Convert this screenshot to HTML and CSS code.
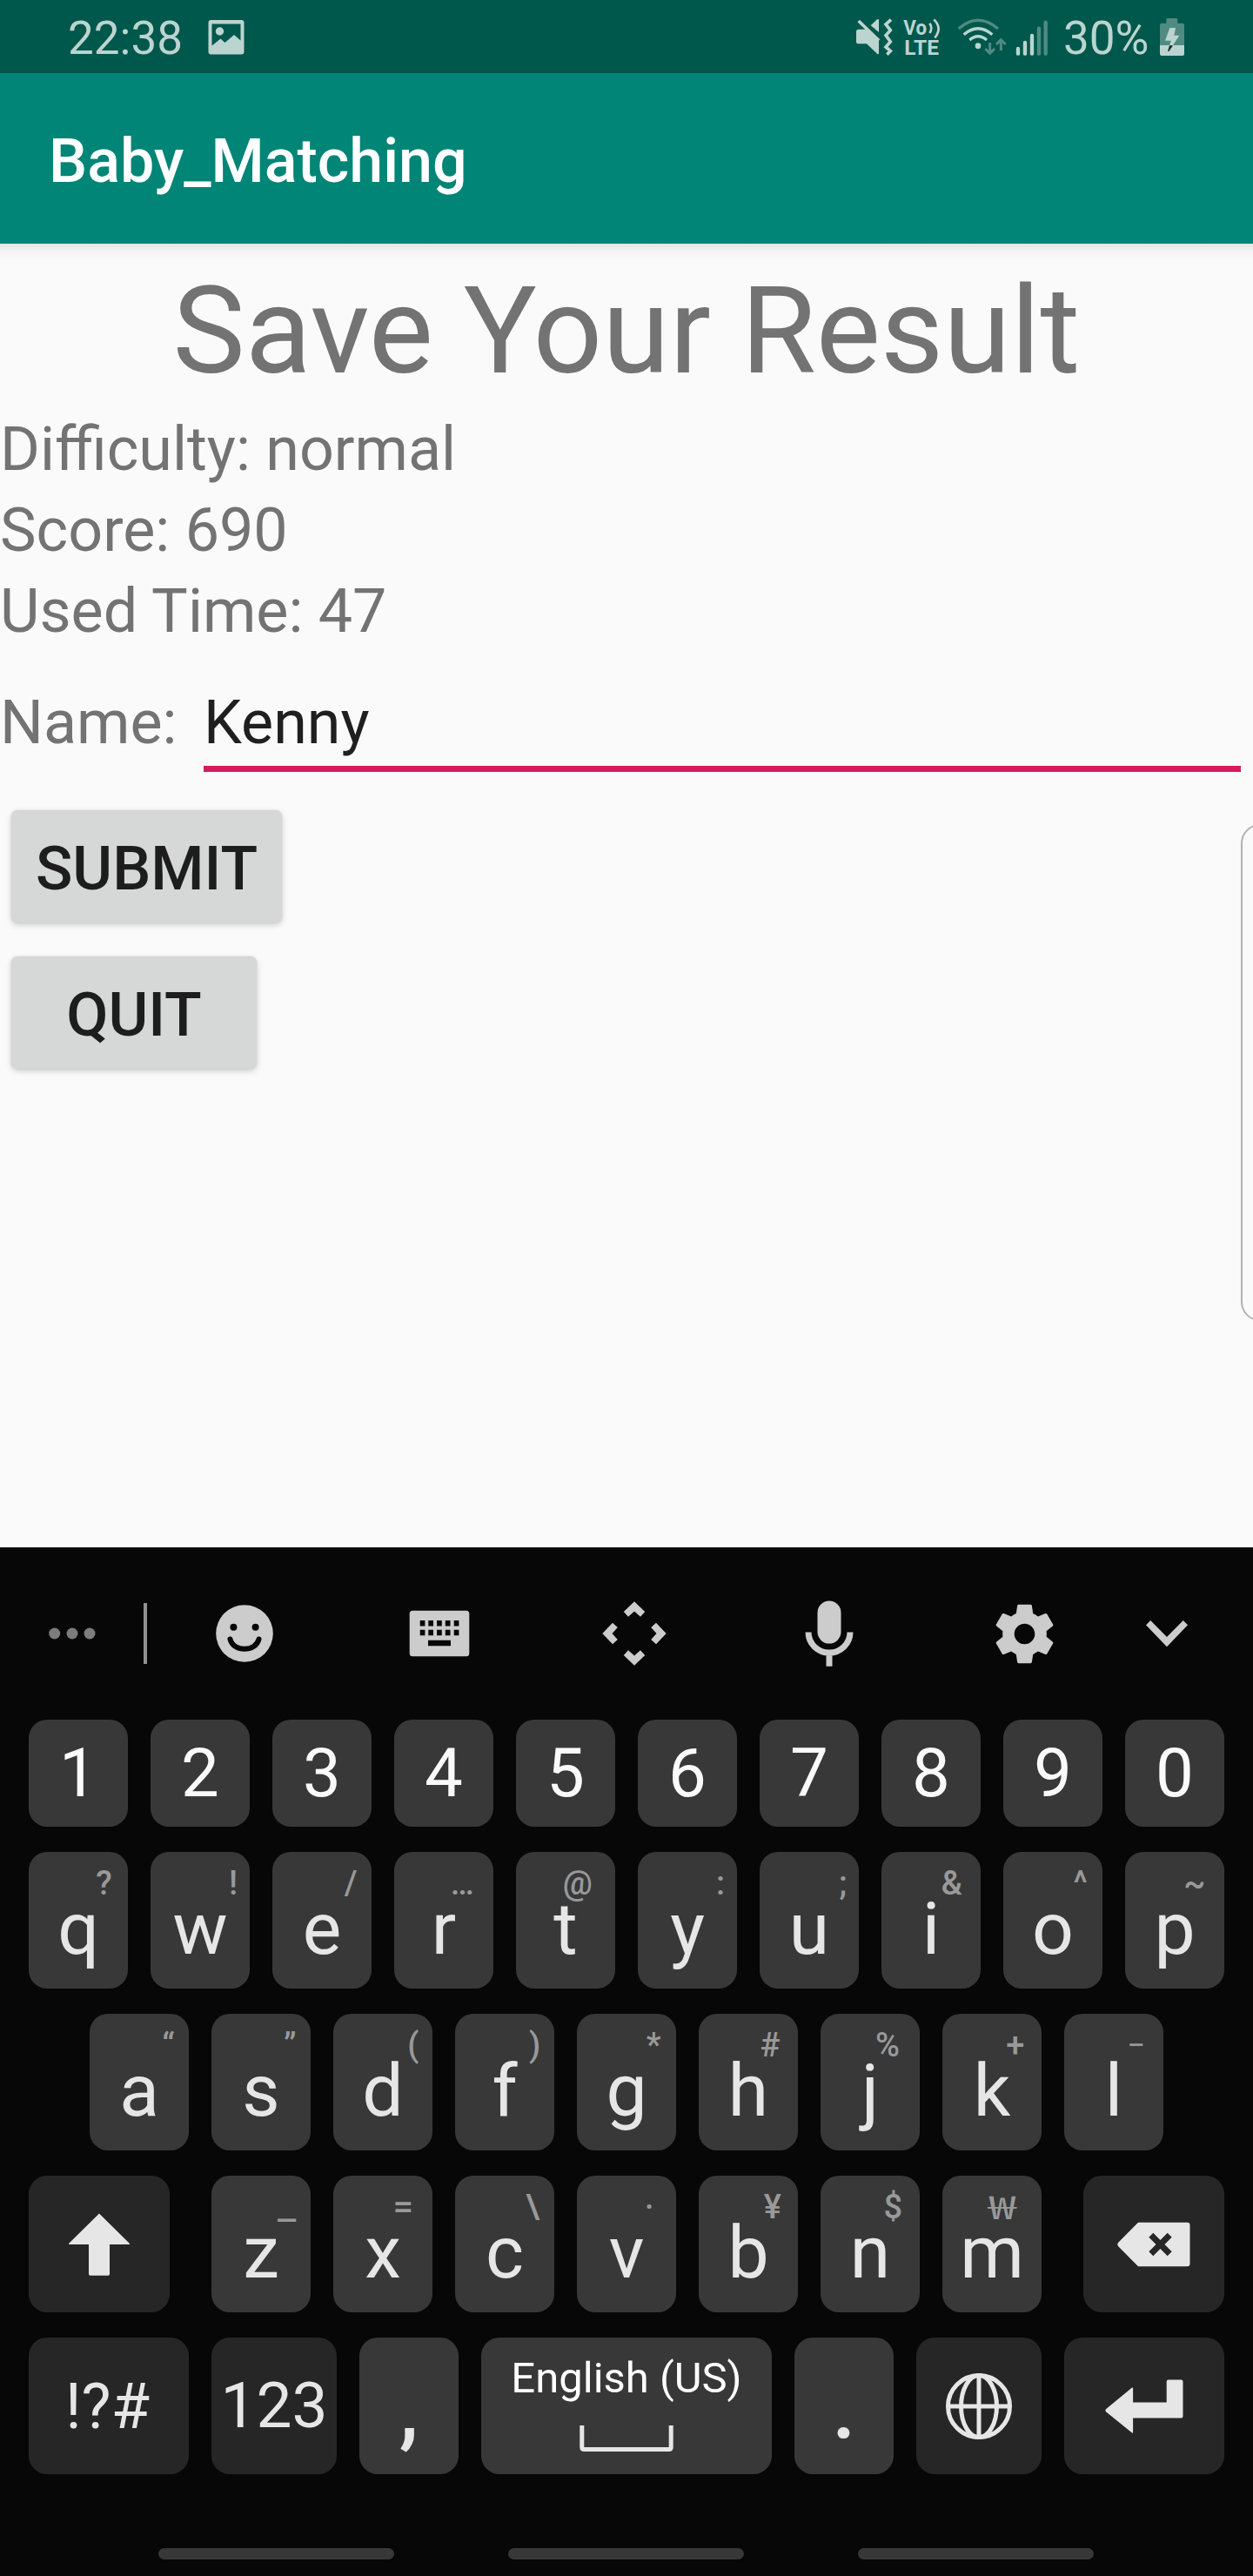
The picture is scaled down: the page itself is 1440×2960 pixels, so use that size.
FILE: index.html
```html
<!DOCTYPE html>
<html lang="en">
<head>
<meta charset="utf-8">
<title>Baby_Matching</title>
<link rel="stylesheet" href="styles.css">
</head>
<body>
<div class="phone">
  <header class="status">
    <span class="clock">22:38</span>
    <svg class="picture" width="42" height="40" viewBox="0 0 42 40">
      <path fill-rule="evenodd" d="M3.500 0h35a3 3 0 0 1 3 3v33.500a3 3 0 0 1-3 3h-35a3 3 0 0 1-3-3V3a3 3 0 0 1 3-3zM4.500 4.500V29.500L14.500 21.500L19.500 26L30 17L37.500 23.500V4.500z"/>
      <circle cx="13.500" cy="13" r="4.700"/>
    </svg>
    <div class="status-icons">
      <svg class="mute" width="43" height="44" viewBox="129 60 129 132">
        <path d="M140 101H166L210 133V183Q210 189 204 185L168 151H140Q132 151 132 143V109Q132 101 140 101z"/>
        <path d="M182 88L204 67Q210 64 210 69V111z"/>
        <path class="line" d="M140 72L210 140" stroke-width="11"/>
        <path class="line" d="M252 68L234 84L250 104L234 122L250 144L234 162L250 176L238 188" stroke-width="11"/>
      </svg>
      <svg class="volte" width="43" height="45" viewBox="294 60 129 135">
        <text x="295" y="119" font-size="70" textLength="80" lengthAdjust="spacingAndGlyphs">Vo</text>
        <text x="298" y="189" font-size="74" textLength="119" lengthAdjust="spacingAndGlyphs">LTE</text>
        <path class="line" d="M385 80Q397 97 385 114M400 67Q430 97 403 130" stroke-width="8"/>
      </svg>
      <svg class="wifi" width="58" height="45" viewBox="480 60 174 135">
        <path class="line dim" d="M485 99Q552 40 621 99" stroke-width="10"/>
        <path class="line" d="M503 119Q552 77 601 119M523 138Q552 113 582 138" stroke-width="10"/>
        <circle cx="552" cy="158" r="10"/>
        <path class="line dim" d="M593 147V180M577 168L593 184L609 168M631 174V142M615 153L631 137L647 153" stroke-width="9"/>
      </svg>
      <svg class="signal" width="38" height="43" viewBox="681 66 114 129">
        <path class="line round" d="M690 168V185M714 147V185M738 123V185" stroke-width="13"/>
        <path class="line round dim" d="M762 98V185M785 77V185" stroke-width="13"/>
      </svg>
      <span class="percent">30%</span>
      <svg class="battery" width="30" height="44" viewBox="1176 60 90 132">
        <path class="dimfill" d="M1201 68Q1201 63 1206 63H1235Q1240 63 1240 68V80H1257Q1263 80 1263 86V156H1179V86Q1179 80 1185 80H1201z"/>
        <path d="M1179 156H1263V186Q1263 192 1257 192H1185Q1179 192 1179 186z"/>
        <path d="M1213 96H1233L1228 122H1246L1224 157H1212L1217 140H1197z"/>
        <path class="bolt-end" d="M1212 157H1224L1210 177H1206z"/>
      </svg>
    </div>
  </header>
  <div class="appbar">Baby_Matching</div>

  <main class="content">
    <h1 class="title">Save Your Result</h1>
    <p class="info">Difficulty: normal</p>
    <p class="info">Score: 690</p>
    <p class="info">Used Time: 47</p>
    <div class="name-row">
      <span class="name-label">Name:</span>
      <div class="name-field">Kenny</div>
    </div>
    <button class="btn submit">SUBMIT</button>
    <button class="btn quit">QUIT</button>
    <div class="edge-handle"></div>
  </main>

  <section class="keyboard">
    <div class="tools">
      <div class="tool more"><svg width="72" height="76" viewBox="-36 -38 72 76"><circle cx="-20.300" r="6.500"/><circle r="6.500"/><circle cx="20" r="6.500"/></svg></div>
      <div class="divider"></div>
      <div class="tool"><svg width="72" height="76" viewBox="-36 -38 72 76"><circle r="32.800"/><circle class="cut" cx="-12.600" cy="-7.300" r="4"/><circle class="cut" cx="12.600" cy="-7.300" r="4"/><path class="cutline" d="M-16.500 6.500C-13 21.500 13 21.500 16.500 6.500"/></svg></div>
      <div class="tool"><svg width="72" height="76" viewBox="-36 -38 72 76"><rect x="-34.300" y="-26.200" width="68.600" height="52.400" rx="3.500"/><path class="cut" d="M-22.300-15h5.700v6.500h-5.700zM-12.700-15h5.700v6.500h-5.700zM-2.900-15h5.700v6.500h-5.700zM6.800-15h5.700v6.500h-5.700zM16.700-15h5.700v6.500h-5.700zM-22.300-4.200h5.700v6.500h-5.700zM-12.700-4.200h5.700v6.500h-5.700zM-2.900-4.200h5.700v6.500h-5.700zM6.800-4.200h5.700v6.500h-5.700zM16.700-4.200h5.700v6.500h-5.700zM-13 7.800h26v6.500h-26z"/></svg></div>
      <div class="tool"><svg width="76" height="76" viewBox="-38 -38 76 76"><path id="arrow" d="M0-36.700L12.200-25L7-19.200L0-25.500L-7-19.200L-12.200-25z"/><use href="#arrow" transform="rotate(90)"/><use href="#arrow" transform="rotate(180)"/><use href="#arrow" transform="rotate(270)"/></svg></div>
      <div class="tool"><svg width="72" height="76" viewBox="-36 -38 72 76"><rect x="-13.500" y="-37.400" width="27" height="49" rx="13.500"/><path class="micline" d="M-24-1.400A24 23.500 0 0 0 24-1.400M0 21V37.700"/></svg></div>
      <div class="tool"><svg width="81" height="81" viewBox="0 0 24 24"><path d="M19.430 12.980c.04-.32.07-.64.07-.98s-.03-.66-.07-.98l2.110-1.650c.19-.15.24-.42.12-.64l-2-3.460c-.12-.22-.39-.3-.61-.22l-2.490 1c-.52-.4-1.080-.73-1.690-.98l-.38-2.650C14.460 2.180 14.250 2 14 2h-4c-.25 0-.46.18-.49.42l-.38 2.650c-.61.25-1.170.59-1.690.98l-2.490-1c-.23-.09-.49 0-.61.22l-2 3.460c-.13.22-.07.49.12.64l2.110 1.650c-.04.32-.07.65-.07.98s.03.66.07.98l-2.110 1.650c-.19.15-.24.42-.12.64l2 3.460c.12.22.39.3.61.22l2.490-1c.52.4 1.080.73 1.690.98l.38 2.650c.03.24.24.42.49.42h4c.25 0 .46-.18.49-.42l.38-2.650c.61-.25 1.170-.59 1.690-.98l2.490 1c.23.09.49 0 .61-.22l2-3.460c.12-.22.07-.49-.12-.64l-2.110-1.650zM12 15.500c-1.930 0-3.500-1.570-3.500-3.500s1.570-3.500 3.500-3.500 3.500 1.570 3.500 3.500-1.570 3.500-3.500 3.500z"/></svg></div>
      <div class="tool hide"><svg width="72" height="76" viewBox="-36 -38 72 76"><path d="M-24-9.700L-18.800-15L0 4L18.800-15L24-9.700L0 15.300z"/></svg></div>
    </div>

    <div class="row digits">
      <div class="key">1</div><div class="key">2</div><div class="key">3</div><div class="key">4</div><div class="key">5</div><div class="key">6</div><div class="key">7</div><div class="key">8</div><div class="key">9</div><div class="key">0</div>
    </div>
    <div class="row">
      <div class="key">q<i class="hint">?</i></div><div class="key">w<i class="hint">!</i></div><div class="key">e<i class="hint">/</i></div><div class="key">r<i class="hint">…</i></div><div class="key">t<i class="hint">@</i></div><div class="key">y<i class="hint">:</i></div><div class="key">u<i class="hint">;</i></div><div class="key">i<i class="hint">&amp;</i></div><div class="key">o<i class="hint">^</i></div><div class="key">p<i class="hint">~</i></div>
    </div>
    <div class="row">
      <div class="key">a<i class="hint">“</i></div><div class="key">s<i class="hint">”</i></div><div class="key">d<i class="hint">(</i></div><div class="key">f<i class="hint">)</i></div><div class="key">g<i class="hint">*</i></div><div class="key">h<i class="hint">#</i></div><div class="key">j<i class="hint">%</i></div><div class="key">k<i class="hint">+</i></div><div class="key">l<i class="hint dash">–</i></div>
    </div>
    <div class="row spread">
      <div class="key fn wide"><svg width="90" height="80" viewBox="-45 -40 90 80"><path d="M0-35.500L35-1Q35.500 0 34 0H12V34Q12 35.700 10.300 35.700H-10.300Q-12 35.700-12 34V0H-34Q-35.500 0-35-1z"/></svg></div>
      <div class="group">
        <div class="key">z<i class="hint under">_</i></div><div class="key">x<i class="hint equal">=</i></div><div class="key">c<i class="hint">\</i></div><div class="key">v<i class="hint dot">·</i></div><div class="key">b<i class="hint">¥</i></div><div class="key">n<i class="hint">$</i></div><div class="key">m<i class="hint won">₩</i></div>
      </div>
      <div class="key fn wide"><svg width="90" height="80" viewBox="-45 -40 90 80"><path d="M-18-25.300H38.500Q41.500-25.300 41.500-22.300V22.300Q41.500 25.300 38.500 25.300H-18L-40.500 2.500Q-43 0-40.500-2.500z"/><path class="erase" d="M-3.200-10.700L18.200 10.700M18.200-10.700L-3.200 10.700"/></svg></div>
    </div>
    <div class="row">
      <div class="key fn symbols">!?#</div>
      <div class="key fn numbers">123</div>
      <div class="key punct">,</div>
      <div class="key space"><span class="lang">English (US)</span><svg width="108" height="32" viewBox="0 0 108 32"><path d="M2.800 1V26Q2.800 28.500 5.300 28.500H102.700Q105.200 28.500 105.200 26V1"/></svg></div>
      <div class="key punct">.</div>
      <div class="key fn globe"><svg width="90" height="80" viewBox="-45 -40 90 80"><circle r="35.500"/><ellipse rx="20.500" ry="35.500"/><path d="M0-35.500V35.500M-35.500 0H35.500"/></svg></div>
      <div class="key fn enter"><svg width="92" height="80" viewBox="-46 -40 92 80"><path d="M-43.700 3L-14-21.500Q-12.900-22-12.900-20.500V-4.400H25.700V-28.500Q25.700-30.500 27.700-30.500H42.500Q44.500-30.500 44.500-28.500V11.500Q44.500 13.500 42.500 13.500H-12.900V29.500Q-12.900 31.200-14 30.500L-43.700 6.500Q-45.500 4.700-43.700 3z"/></svg></div>
    </div>
    <div class="nav"><b></b><b></b><b></b></div>
  </section>
</div>
</body>
</html>
```
FILE: styles.css
```css
* { box-sizing: border-box; }
body { margin: 0; font-family: Roboto, "Liberation Sans", sans-serif; background: #fafafa; }
p, h1 { margin: 0; font-weight: 400; }

.phone { width: 1440px; height: 2960px; display: flex; flex-direction: column; overflow: hidden; }

.status {
  height: 84px; flex: none; display: flex; align-items: flex-start;
  padding: 0 78px 0 78px; background: #00574b; color: #bbd4d0; fill: #bbd4d0;
  font-size: 53px; line-height: 88px;
}
.picture { margin: 23px 0 0 29px; }
.status-icons { display: flex; margin-left: auto; }
.status-icons svg { margin-top: 20px; overflow: visible; }
.status .line { fill: none; stroke: #bbd4d0; }
.status .dim { stroke: #4f8b82; }
.status .dimfill { fill: #4f8b82; }
.status .round { stroke-linecap: round; }
.status .bolt-end { fill: #102a26; }
.volte { margin-left: 12px; font-weight: 700; }
.wifi { margin-left: 19px; }
.signal { margin-left: 9px; }
.status-icons .signal { margin-top: 22px; }
.percent { margin-left: 17px; width: 98px; }
.battery { margin-left: 12px; }

.appbar {
  height: 196px; flex: none; padding-left: 56px; background: #008577; color: #fff;
  font-size: 70px; font-weight: 500; line-height: 202px;
}

.content {
  position: relative; flex: none; height: 1498px; overflow: hidden; color: #737373;
  background: linear-gradient(#e4e4e4, #f3f3f3 8px, #fafafa 20px);
}
.title { height: 186px; font-size: 140px; line-height: 200px; text-align: center; }
.info { height: 93px; font-size: 70px; line-height: 100px; }
.name-row { display: flex; padding: 35px 14px 0 0; margin-bottom: 44px; font-size: 70px; line-height: 100px; }
.name-label { width: 234px; }
.name-field { flex: 1; color: #1f1f1f; border-bottom: 7px solid #d81b60; }
.btn {
  display: block; height: 129px; margin: 0 0 39px 13px; padding: 0; border: 0; border-radius: 7px;
  background: #d6d7d7; color: #1d1d1d; font: 500 70px/134px Roboto, sans-serif;
  box-shadow: 0 3px 7px rgba(0, 0, 0, .17), 0 0 3px rgba(0, 0, 0, .1);
}
.submit { width: 311px; }
.quit { width: 282px; }
.edge-handle {
  position: absolute; left: 1426px; top: 667px; width: 60px; height: 571px;
  border: 2px solid #b2b2b2; border-radius: 22px;
}

.keyboard { flex: 1; background: #070707; color: #e6e6e6; fill: #e6e6e6; }
.tools { display: flex; align-items: center; height: 198px; fill: #ccc; }
.tool { width: 224px; display: flex; justify-content: center; }
.more { width: 165px; fill: #7c7c7c; }
.divider { width: 4px; height: 70px; background: #919191; }
.hide { width: 104px; }
.cut { fill: #070707; }
.cutline { fill: none; stroke: #070707; stroke-width: 6px; stroke-linecap: round; }
.micline { fill: none; stroke: #ccc; stroke-width: 7px; }

.row { display: flex; justify-content: center; gap: 26px; height: 157px; margin: 0 33px 29px; }
.spread { justify-content: space-between; }
.group { display: flex; gap: 26px; }
.key {
  position: relative; width: 114px; height: 100%; border-radius: 21px; background: #383838;
  font-size: 84px; line-height: 98px; padding-top: 40px; text-align: center;
}
.fn { background: #262626; padding-top: 0; }
.fn.wide, .globe, .enter { display: flex; align-items: center; justify-content: center; }
.digits { height: 123px; }
.digits .key { padding-top: 0; font-size: 78px; line-height: 123px; color: #fafafa; }
.hint {
  position: absolute; right: 9px; top: 13px; font-size: 38px; line-height: 46px; font-weight: 500;
  font-style: normal; color: #999; transform: translateX(-50%);
}
.hint.dot { right: 20px; }
.hint.dash { font-size: 30px; top: 13px; right: 12px; }
.hint.under { transform: translateX(-58%) scaleX(1.25); }
.hint.equal { transform: translateX(-68%) scaleX(1.1); }
.hint.won {
  font-family: "Noto Sans CJK KR", Roboto, sans-serif; font-weight: 400; font-size: 37px;
  right: 24px; top: 11px; transform: translateX(-50%) scaleX(1.55);
}
.wide { width: 162px; }
.erase { fill: none; stroke: #262626; stroke-width: 7px; }
.symbols { width: 184px; padding-right: 3px; font-size: 72px; line-height: 159px; }
.numbers { width: 144px; font-size: 73px; line-height: 157px; }
.punct { font-size: 100px; font-weight: 500; line-height: 117px; padding-top: 22px; }
.space { width: 334px; padding-top: 17px; display: flex; flex-direction: column; align-items: center; color: #fff; }
.lang { font-size: 49px; line-height: 60px; }
.space svg { margin-top: 23px; fill: none; stroke: #e6e6e6; stroke-width: 5px; }
.globe { width: 144px; }
.globe svg { fill: none; stroke: #e6e6e6; stroke-width: 5px; }
.enter { width: 184px; }
.nav { display: flex; gap: 131px; padding: 56px 0 0 182px; }
.nav b { width: 271px; height: 13px; border-radius: 7px; background: #383838; }
```
